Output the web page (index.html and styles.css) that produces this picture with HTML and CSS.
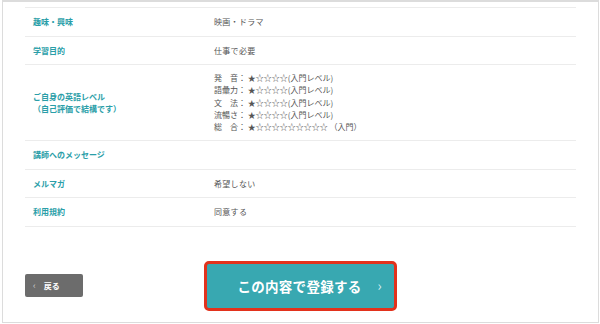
FILE: index.html
```html
<!doctype html>
<html lang="ja">
<head>
  <meta charset="utf-8"/>
  <title>確認画面</title>
  <link rel="stylesheet" href="styles.css">
</head>
<body>
  <div class="panel">
    <!-- confirm table -->
    <table class="confirm">
      <tr>
        <th>趣味・興味</th>
        <td>映画・ドラマ</td>
      </tr>
      <tr>
        <th>学習目的</th>
        <td>仕事で必要</td>
      </tr>
      <tr>
        <th>ご自身の英語レベル<br>（自己評価で結構です）</th>
        <td class="levels">
          発　音： ★☆☆☆☆(入門レベル)<br>
          語彙力： ★☆☆☆☆(入門レベル)<br>
          文　法： ★☆☆☆☆(入門レベル)<br>
          流暢さ： ★☆☆☆☆(入門レベル)<br>
          総　合： ★☆☆☆☆☆☆☆☆☆ （入門）
        </td>
      </tr>
      <tr>
        <th>講師へのメッセージ</th>
        <td></td>
      </tr>
      <tr>
        <th>メルマガ</th>
        <td>希望しない</td>
      </tr>
      <tr>
        <th>利用規約</th>
        <td>同意する</td>
      </tr>
    </table>

    <!-- actions -->
    <div class="actions">
      <button class="btn-back"><span class="arr">‹</span>戻る</button>
      <button class="btn-submit">この内容で登録する<span class="chev">›</span></button>
      <span></span>
    </div>
  </div>
</body>
</html>
```

FILE: styles.css
```css
:root{
  --teal:#2a9ea8;
  --btn-teal:#38a8b1;
  --red:#e2321c;
  --line:#ececec;
  --text:#555;
}
*{box-sizing:border-box;margin:0;padding:0}
html,body{height:100%;background:#fff}
body{
  padding:0 1px 0 2px;
  font-family:"Noto Sans CJK JP","Noto Sans",sans-serif;
  color:var(--text);
}

.panel{
  height:323px;
  border:1px solid #dcdcdc;
  border-top-width:2px;
  padding:5px 22px 0 22px;
  display:flex;
  flex-direction:column;
}

/* ---------- TABLE ---------- */
.confirm{width:100%;border-collapse:collapse}
.confirm tr{border-top:1px solid var(--line);border-bottom:1px solid var(--line)}
.confirm th,.confirm td{
  padding:8px 8px 7.5px;
  font-size:8px;
  line-height:12px;
  text-align:left;
  vertical-align:middle;
}
.confirm th{width:181px;color:var(--teal);font-weight:700}
.confirm td{color:var(--text);letter-spacing:.3px}
.confirm td.levels{line-height:12.3px;padding:7px 8px;letter-spacing:0}

/* ---------- BUTTONS ---------- */
.actions{
  margin-top:34px;
  display:grid;
  grid-template-columns:1fr auto 1fr;
  align-items:center;
}
.btn-back{
  justify-self:start;
  width:58px;
  height:23px;
  border:none;
  border-radius:2px;
  background:#6c6c6c;
  color:#fff;
  font-family:inherit;
  font-size:8px;
  font-weight:700;
  text-align:left;
  padding-left:8px;
  display:flex;
  align-items:center;
}
.btn-back .arr{color:#cfcfcf;font-weight:400;margin-right:8px;font-size:9px}

.btn-submit{
  position:relative;
  width:193px;
  height:50px;
  border:3px solid var(--red);
  border-radius:5px;
  background:var(--btn-teal);
  color:#fff;
  font-family:inherit;
  font-size:13.5px;
  font-weight:700;
  letter-spacing:.3px;
  padding-right:2px;
}
.btn-submit .chev{
  position:absolute;
  right:12px;
  top:50%;
  transform:translateY(-54%);
  font-size:14px;
  font-weight:400;
  color:#d9eff1;
}
```
